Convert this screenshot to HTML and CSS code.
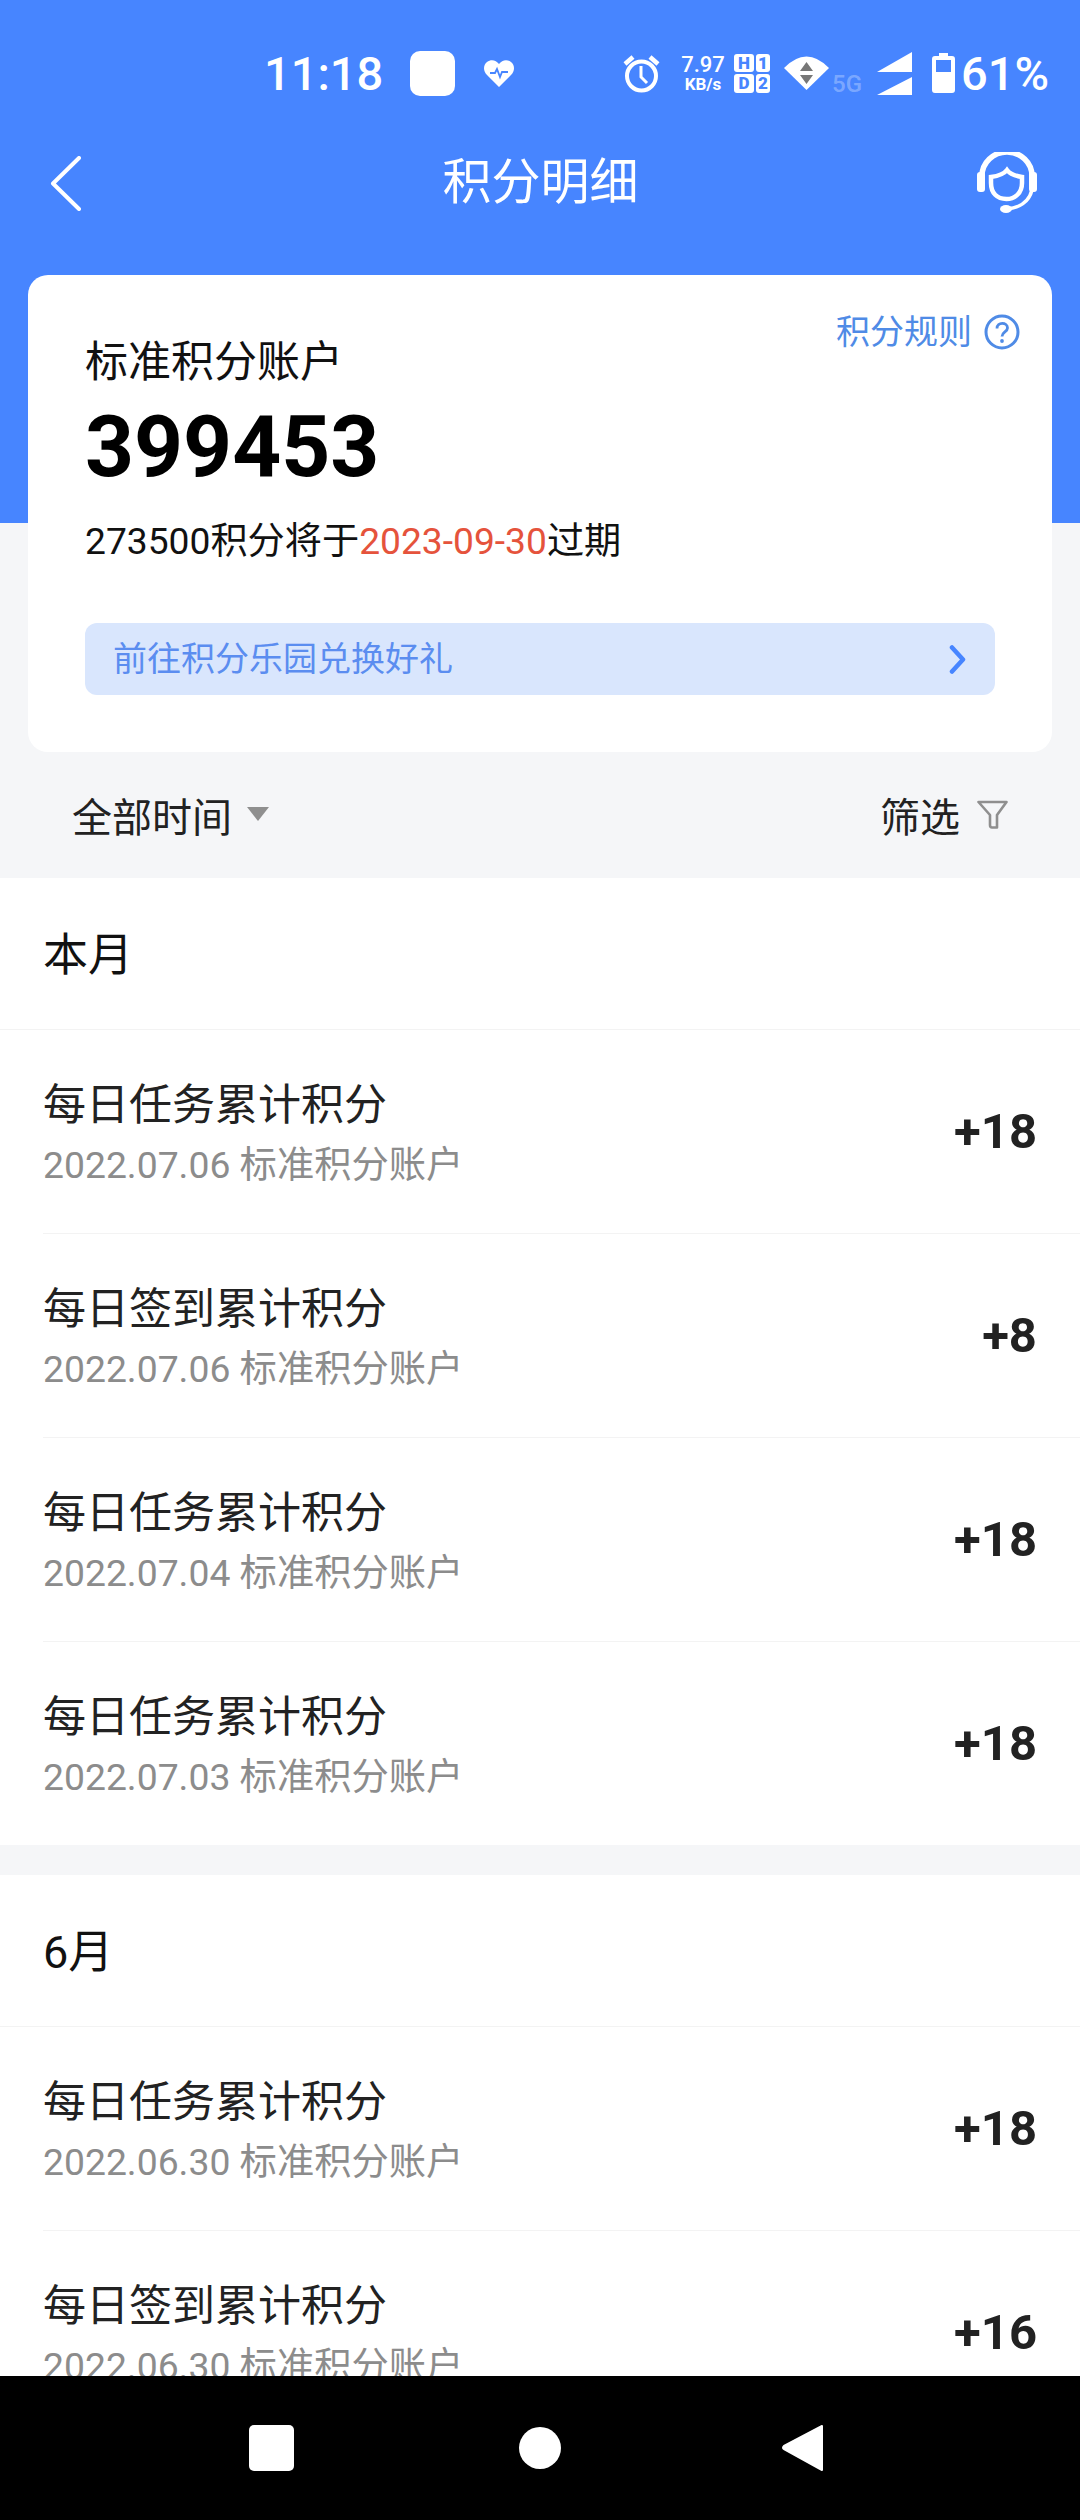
FILE: index.html
```html
<!DOCTYPE html>
<html lang="zh-CN">
<head>
    <meta charset="UTF-8">
    <meta name="viewport" content="width=device-width, initial-scale=1.0">
    <title>积分明细</title>
    <link rel="stylesheet" href="styles.css">
</head>
<body>
<div class="page">
    <!-- Status bar -->
    <div class="statusbar">
        <span class="clock">11:18</span>
        <span class="app-square"></span>
        <svg class="st-heart" viewBox="0 0 30 27">
            <path d="M15 27 L3 15 C-1 11 -1 5 3 2 C7 -1 12 0 15 4 C18 0 23 -1 27 2 C31 5 31 11 27 15 Z" fill="#fff"/>
            <path d="M6 13 H11 L13 9 L16 17 L18 12 H24" fill="none" stroke="#4785ff" stroke-width="1.8"/>
        </svg>
        <svg class="st-alarm" viewBox="0 0 37 39">
            <circle cx="18.5" cy="22" r="14.5" fill="none" stroke="#fff" stroke-width="4"/>
            <path d="M18 12 V23 L24 29" fill="none" stroke="#fff" stroke-width="3"/>
            <path d="M2 10 L10 3 M35 10 L27 3" fill="none" stroke="#fff" stroke-width="4.5"/>
        </svg>
        <div class="speed">
            <span class="speed-num">7.97</span>
            <span class="speed-unit">KB/s</span>
        </div>
        <div class="sim">
            <span class="sim-cell">H</span>
            <span class="sim-cell">1</span>
            <span class="sim-cell">D</span>
            <span class="sim-cell">2</span>
        </div>
        <svg class="st-wifi" viewBox="0 0 45 34">
            <path d="M0 12 Q22.5 -11 45 12 L22.5 34 Z" fill="#fff"/>
            <path d="M22.5 6 L29 15 H16 Z M16 19 H29 L22.5 28 Z" fill="#777"/>
        </svg>
        <span class="net">5G</span>
        <svg class="st-signal" viewBox="0 0 35 43">
            <path d="M0 20 L35 0 V20 Z M0 43 L35 25 V43 Z" fill="#fff"/>
        </svg>
        <svg class="st-battery" viewBox="0 0 23 40">
            <path d="M7 0 H16 V3 H20 Q23 3 23 6 V37 Q23 40 20 40 H3 Q0 40 0 37 V6 Q0 3 3 3 H7 Z" fill="#fff"/>
            <rect x="4" y="7" width="15" height="12" fill="#4785ff"/>
        </svg>
        <span class="pct">61%</span>
    </div>

    <!-- Title bar -->
    <header class="appbar">
        <svg class="back" viewBox="0 0 31 55">
            <path d="M29 2 L3 27.5 L29 53" fill="none" stroke="#fff" stroke-width="4" stroke-linecap="round" stroke-linejoin="round"/>
        </svg>
        <h1 class="appbar-title">积分明细</h1>
        <svg class="service" viewBox="0 0 60 62">
            <path d="M5 24 A25 24 0 0 1 55 24" fill="none" stroke="#fff" stroke-width="5.500"/>
            <rect x="0" y="20" width="8" height="20" rx="3" fill="#fff"/>
            <rect x="52" y="20" width="8" height="20" rx="3" fill="#fff"/>
            <path d="M30 18 C33 22 38 24 45 25 V31 C45 41 38 47 29.500 47 C20 47 14 41 14 31 V25 C21 24 27 22 30 18 Z" fill="none" stroke="#fff" stroke-width="4.500"/>
            <path d="M55 38 C52 50 42 56 30 57" fill="none" stroke="#fff" stroke-width="3.500"/>
            <ellipse cx="29" cy="57" rx="6" ry="4" fill="#fff"/>
        </svg>
    </header>

    <!-- Account card -->
    <section class="card">
        <a class="rules">
            <span>积分规则</span>
            <svg class="rules-icon" viewBox="0 0 36 36">
                <circle cx="18" cy="18" r="16" fill="none" stroke="#4f8be6" stroke-width="3"/>
                <path d="M13 14.500 C13 7.500 23.500 8 23.500 14 C23.500 18 18 18 18 22.500" fill="none" stroke="#4f8be6" stroke-width="2.800"/>
                <circle cx="18" cy="27" r="1.900" fill="#4f8be6"/>
            </svg>
        </a>
        <div class="card-label">标准积分账户</div>
        <div class="card-points">399453</div>
        <div class="card-expire">273500积分将于<span class="expire-date">2023-09-30</span>过期</div>
        <a class="card-link">
            <span>前往积分乐园兑换好礼</span>
            <svg class="link-arrow" viewBox="0 0 17 29">
                <path d="M3 2.500 L14 14.500 L3 26.500" fill="none" stroke="#4785ff" stroke-width="4.500" stroke-linecap="round" stroke-linejoin="round"/>
            </svg>
        </a>
    </section>

    <!-- Filters -->
    <div class="filters">
        <div class="filter-time">全部时间<span class="caret"></span></div>
        <div class="filter-btn">筛选
            <svg class="funnel" viewBox="0 0 31 29">
                <path d="M1.500 2 H29.500 L20 15 V27.500 H15 Q13 27.500 13 25 V15 Z" fill="none" stroke="#8f8f8f" stroke-width="2.600" stroke-linejoin="round"/>
            </svg>
        </div>
    </div>

    <!-- Records -->
    <main class="records">
        <section class="month">
            <h2 class="month-title">本月</h2>
            <div class="row">
                <div class="row-text"><div class="row-name">每日任务累计积分</div><div class="row-meta">2022.07.06 标准积分账户</div></div>
                <div class="row-amount">+18</div>
            </div>
            <div class="row">
                <div class="row-text"><div class="row-name">每日签到累计积分</div><div class="row-meta">2022.07.06 标准积分账户</div></div>
                <div class="row-amount">+8</div>
            </div>
            <div class="row">
                <div class="row-text"><div class="row-name">每日任务累计积分</div><div class="row-meta">2022.07.04 标准积分账户</div></div>
                <div class="row-amount">+18</div>
            </div>
            <div class="row">
                <div class="row-text"><div class="row-name">每日任务累计积分</div><div class="row-meta">2022.07.03 标准积分账户</div></div>
                <div class="row-amount">+18</div>
            </div>
        </section>
        <section class="month">
            <h2 class="month-title">6月</h2>
            <div class="row">
                <div class="row-text"><div class="row-name">每日任务累计积分</div><div class="row-meta">2022.06.30 标准积分账户</div></div>
                <div class="row-amount">+18</div>
            </div>
            <div class="row">
                <div class="row-text"><div class="row-name">每日签到累计积分</div><div class="row-meta">2022.06.30 标准积分账户</div></div>
                <div class="row-amount">+16</div>
            </div>
        </section>
    </main>

    <!-- Navigation bar -->
    <nav class="navbar">
        <span class="nav-square"></span>
        <span class="nav-circle"></span>
        <svg class="nav-back" viewBox="0 0 42 48">
            <path d="M40 2 V46 L2 25 Q0 24 2 22 Z" fill="#fff" stroke="#fff" stroke-width="2" stroke-linejoin="round"/>
        </svg>
    </nav>
</div>
</body>
</html>
```

FILE: styles.css
```css
* { box-sizing: border-box; margin: 0; padding: 0; }

body {
    font-family: Roboto, "Noto Sans CJK SC", sans-serif;
    color: #111;
}

.page {
    width: 1080px;
    height: 2520px;
    display: flex;
    flex-direction: column;
    overflow: hidden;
    background: linear-gradient(#4785ff 523px, #f5f6f8 523px);
}

/* Status bar */
.statusbar {
    height: 130px;
    padding: 16px 0 0 264px;
    display: flex;
    align-items: center;
    color: #fff;
    flex-shrink: 0;
}
.clock { font-size: 47px; font-weight: 500; width: 146px; }
.app-square { width: 45px; height: 45px; background: #fff; border-radius: 10px; }
.st-heart { width: 30px; height: 27px; margin-left: 29px; }
.st-alarm { width: 37px; height: 39px; margin-left: 109px; }
.speed { width: 46px; margin-left: 20px; display: flex; flex-direction: column; align-items: center; }
.speed-num { font-size: 22px; line-height: 23px; font-weight: 500; white-space: nowrap; }
.speed-unit { font-size: 17px; line-height: 17px; font-weight: 700; white-space: nowrap; }
.sim {
    width: 36px;
    height: 39px;
    margin-left: 8px;
    display: grid;
    grid-template-columns: 20px 14px;
    grid-template-rows: 18px 19px;
    gap: 2px;
}
.sim-cell {
    background: #fff;
    color: #4785ff;
    border-radius: 3px;
    font-size: 17px;
    line-height: 18px;
    font-weight: 900;
    text-align: center;
}
.st-wifi { width: 45px; height: 34px; margin-left: 14px; }
.net { font-size: 24px; width: 32px; margin: 22px 0 0 3px; color: rgba(255, 255, 255, 0.3); font-weight: 500; }
.st-signal { width: 35px; height: 43px; margin-left: 13px; }
.st-battery { width: 23px; height: 40px; margin-left: 20px; }
.pct { font-size: 47px; font-weight: 500; margin-left: 6px; white-space: nowrap; }

/* Title bar */
.appbar {
    height: 106px;
    padding: 0 43px 0 50px;
    display: flex;
    align-items: center;
    justify-content: space-between;
    flex-shrink: 0;
}
.back { width: 31px; height: 55px; }
.appbar-title { font-size: 49px; font-weight: 400; color: #fff; line-height: 106px; margin-left: 23px; }
.service { width: 60px; height: 62px; }

/* Account card */
.card {
    position: relative;
    margin: 39px 28px 0;
    padding: 62px 57px 57px;
    background: #fff;
    border-radius: 20px;
    flex-shrink: 0;
}
.rules {
    position: absolute;
    top: 32px;
    right: 32px;
    display: flex;
    align-items: center;
    gap: 12px;
    font-size: 34px;
    line-height: 50px;
    color: #4f8be6;
}
.rules-icon { width: 36px; height: 36px; }
.card-label { font-size: 43px; line-height: 50px; }
.card-points { font-size: 85.500px; line-height: 100px; font-weight: 700; margin-top: 10px; color: #000; }
.card-expire { font-size: 37.200px; line-height: 50px; margin-top: 19px; }
.expire-date { color: #e5533c; }
.card-link {
    height: 72px;
    margin-top: 57px;
    padding: 0 29px 5px 28px;
    display: flex;
    align-items: center;
    justify-content: space-between;
    background: #d9e6fd;
    border-radius: 12px;
    font-size: 34px;
    color: #5b8df0;
}
.link-arrow { width: 17px; height: 29px; margin-top: 5px; }

/* Filters */
.filters {
    height: 126px;
    padding: 0 72px;
    display: flex;
    align-items: center;
    justify-content: space-between;
    font-size: 40px;
    color: #222;
    flex-shrink: 0;
}
.filter-time { display: flex; align-items: center; }
.caret {
    width: 0;
    height: 0;
    margin: -2px 0 0 15px;
    border-left: 11px solid transparent;
    border-right: 11px solid transparent;
    border-top: 14px solid #8f8f8f;
}
.filter-btn { display: flex; align-items: center; gap: 17px; }
.funnel { width: 31px; height: 29px; margin-top: -2px; }

/* Records */
.records { flex: 1; overflow: hidden; min-height: 0; }
.month { background: #fff; margin-bottom: 30px; }
.month-title {
    height: 152px;
    padding-left: 43px;
    font-size: 45px;
    font-weight: 400;
    line-height: 155px;
    color: #111;
    border-bottom: 1px solid #f3f3f3;
}
.row {
    height: 204px;
    margin-left: 43px;
    padding-right: 43px;
    display: flex;
    align-items: center;
    justify-content: space-between;
    border-bottom: 1px solid #f3f3f3;
}
.row:last-child { border-bottom: 0; height: 203px; }
.row-text { padding-top: 6px; }
.row-name { font-size: 43px; line-height: 60px; color: #222; }
.row-meta { font-size: 37.300px; line-height: 60px; color: #8c8c8c; }
.row-amount { font-size: 49px; font-weight: 700; color: #222; }

/* Navigation bar */
.navbar {
    height: 144px;
    padding-left: 249px;
    display: flex;
    align-items: center;
    background: #000;
    flex-shrink: 0;
}
.nav-square { width: 45px; height: 46px; background: #fff; border-radius: 5px; }
.nav-circle { width: 42px; height: 42px; margin-left: 225px; background: #fff; border-radius: 50%; }
.nav-back { width: 42px; height: 48px; margin-left: 221px; }
```
